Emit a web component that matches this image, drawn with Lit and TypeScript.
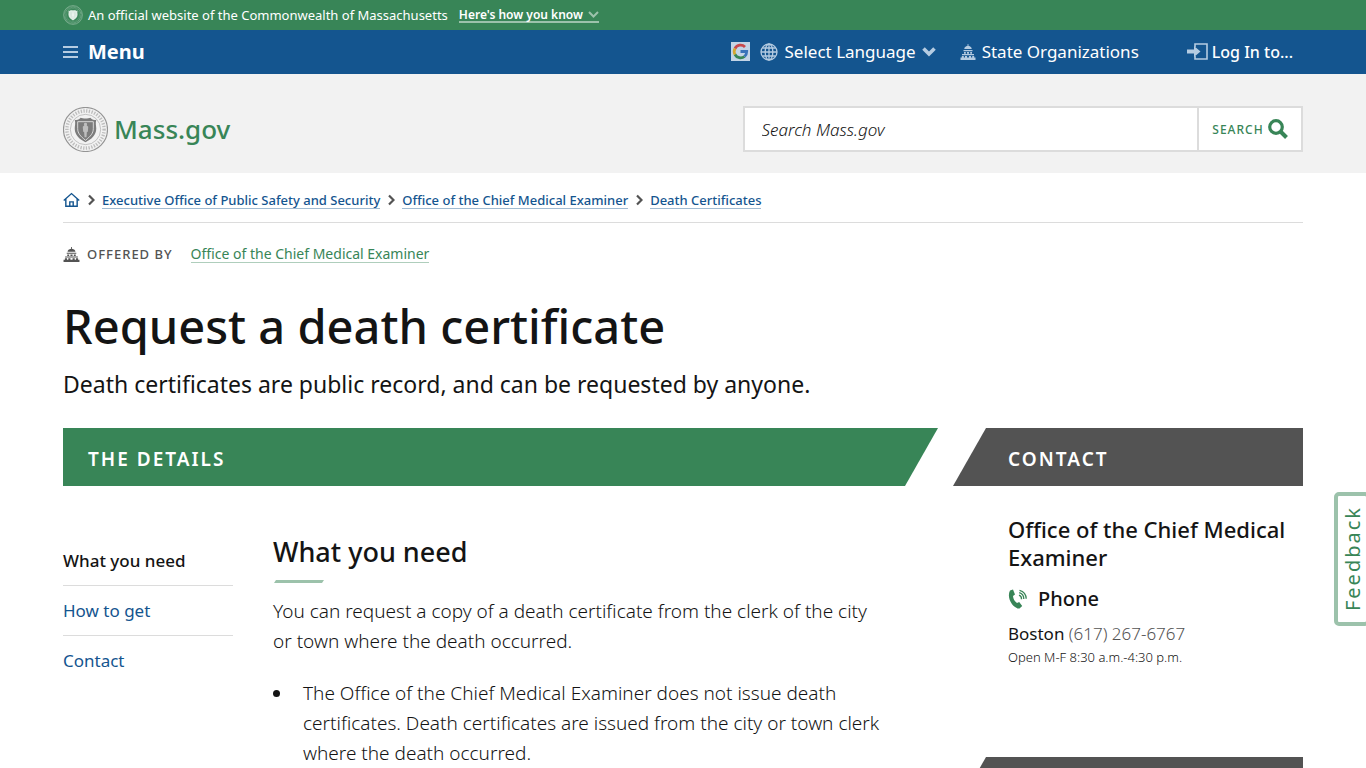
import { LitElement, html, css, svg } from "lit";
import { customElement } from "lit/decorators.js";

const capitol = svg`
  <path d="M7.600 0h.8v1.800c2 .3 3.300 1.600 3.300 3.300H4.300c0-1.700 1.300-3 3.300-3.300z"/>
  <path d="M3.500 6h9v1.200h-9zM4 8h1.800v1.700H4zM7 8h2v1.700H7zM10.200 8H12v1.700h-1.800zM2 10h12v1.200H2zM1.800 12h2v1.600h-2zM5 12h2v1.600H5zM9 12h2v1.600H9zM12.200 12h2v1.600h-2zM.5 13.600h15V16H.5z"/>`;

const seal = svg`
  <circle cx="24" cy="24" r="22.500" fill="none" stroke="currentColor" stroke-width="1.200" opacity=".8"/>
  <circle cx="24" cy="24" r="19" fill="none" stroke="currentColor" stroke-width="3.500" stroke-dasharray="1.300 1.500" opacity=".45"/>
  <circle cx="24" cy="24" r="15.500" fill="none" stroke="currentColor" stroke-width=".7" opacity=".6"/>
  <path d="M13 14c3 1 5-1 6-2 2 1 8 1 10 0 1 1 3 3 6 2-1 4 0 6 0 9 0 7-5 11-11 14-6-3-11-7-11-14 0-3 1-5 0-9z" fill="currentColor"/>
  <path d="M16 16h16v7c0 5-3 8-8 12-5-4-8-7-8-12z" fill="none" stroke="#fff" stroke-width="1" opacity=".7"/>
  <path d="M24 17a1.600 1.600 0 0 1 1.200 2.700l1.600 1.600-.4 5-1 .3-.4 5.400h-2l-.4-5.400-1-.3-.4-5 1.600-1.600A1.600 1.600 0 0 1 24 17z" fill="#fff" opacity=".5"/>`;

const chevron = svg`<path d="M2 1.500L6.500 6 2 10.500" fill="none" stroke="currentColor" stroke-width="2.200"/>`;

@customElement("app-root")
export class AppRoot extends LitElement {
  static styles = css`
    :host {
      display: block;
      color: #141414;
      background: #fff;
      font-family: "Noto Sans", "Open Sans", sans-serif;
      font-size: 17px;
    }
    * { box-sizing: border-box; }
    svg { display: block; flex: none; }
    a { color: inherit; text-decoration: none; }
    h1, h2, h3, h4, p, ul { margin: 0; padding: 0; font-weight: 500; }
    button { font: inherit; color: inherit; background: none; border: 0; padding: 0; cursor: pointer; }
    .wrap { max-width: 1288px; margin: 0 auto; padding: 0 24px; }
    .row { display: flex; align-items: center; }

    .official { background: #388557; color: #fff; font-size: 13px; }
    .official .row { height: 30px; gap: 5px; padding-bottom: 1px; }
    .seal-small { color: #d7e7dd; }
    .know {
      display: flex; align-items: center; gap: 5px; margin-left: 6px; padding-top: 2px;
      height: 17px; font-size: 12px; font-weight: 600; border-bottom: 2px solid #9cc2ab;
    }
    .know svg { color: #9cc2ab; }

    .bar { background: #14558f; color: #fff; }
    .bar .row { height: 44px; padding-bottom: 1px; }
    .bar svg { color: #b5cce2; }
    .menu { display: flex; align-items: center; gap: 10px; font-size: 20px; font-weight: 700; }
    .tools { display: flex; align-items: center; margin-left: auto; padding-right: 10px; }
    .tool { display: flex; align-items: center; gap: 6px; }
    .lang { margin-right: 24px; }
    .lang svg:first-child { margin-right: 3px; }
    .orgs { margin-right: 48px; }
    .login { gap: 4px; font-size: 16px; font-weight: 500; }

    .brand { background: #f2f2f2; }
    .brand .row { height: 99px; padding-top: 11px; justify-content: space-between; }
    .logo { display: flex; align-items: center; gap: 6px; color: #388557; font-size: 26px; font-weight: 500; }
    .logo svg { color: #7c7c7c; }
    .search { display: flex; width: 45.2%; height: 46px; border: 2px solid #dcdcdc; background: #fff; }
    .search input {
      flex: 1; min-width: 0; border: 0; outline: 0; padding: 0 17px; background: none;
      font: italic 300 17px "Noto Sans", sans-serif; color: #141414;
    }
    .search input::placeholder { color: #141414; opacity: 1; }
    .search button {
      display: flex; align-items: center; justify-content: center; gap: 4px; width: 104px;
      border-left: 2px solid #dcdcdc; color: #388557; font-size: 12px; font-weight: 500; letter-spacing: 1px;
    }

    .crumbs {
      display: flex; align-items: center; gap: 7px; height: 50px; padding-top: 5px;
      border-bottom: 1px solid #dcdcdc; color: #14558f; font-size: 13px; font-weight: 500;
    }
    .crumbs a { line-height: 16px; }
    .crumbs .text, .offered a { border-bottom: 1px solid #a1bbd2; }
    .crumbs .sep { color: #535353; }
    .offered { display: flex; align-items: center; height: 62px; font-size: 14px; color: #535353; }
    .offered .label { margin: 0 18px 0 7px; font-size: 13px; font-weight: 500; letter-spacing: 1px; }
    .offered a { color: #388557; border-color: #afcebc; line-height: 17px; }

    h1 { padding-top: 8px; font-size: 47px; line-height: 66px; }
    .lede { padding-top: 11px; font-size: 23px; line-height: 28px; font-weight: 400; }

    .columns { display: grid; grid-template-columns: minmax(0, 5fr) minmax(0, 2fr); column-gap: 15px; padding-top: 30px; }
    .band {
      height: 58px; padding: 3px 0 0 25px; display: flex; align-items: center;
      background: #388557; color: #fff; font-size: 19px; font-weight: 600; letter-spacing: 2px;
      clip-path: polygon(0 0, 100% 0, calc(100% - 33px) 100%, 0 100%);
    }
    .side .band { padding-left: 55px; background: #535353; clip-path: polygon(33px 0, 100% 0, 100% 100%, 0 100%); }
    .body { display: grid; grid-template-columns: 170px minmax(0, 1fr); column-gap: 40px; padding: 49px 53px 0 0; }
    .toc { padding-top: 1px; }
    .toc a { display: block; height: 50px; line-height: 49px; border-bottom: 1px solid #dcdcdc; color: #14558f; }
    .toc a:last-child { border: 0; }
    .toc .current { color: #141414; font-weight: 500; }
    h3 { font-size: 27px; line-height: 34px; }
    .rule { width: 50px; height: 3px; margin: 11px 0 13px 1px; background: #9cc2ab; clip-path: polygon(2px 0, 100% 0, calc(100% - 2px) 100%, 0 100%); }
    .text-block { font-size: 19px; line-height: 30px; font-weight: 300; }
    .list { list-style: none; margin-top: 22px; }
    .list li { display: flex; gap: 23px; }
    .list li::before { content: ""; flex: none; width: 7px; height: 7px; margin-top: 12px; border-radius: 50%; background: #141414; }

    .contact { height: 271px; padding: 29px 0 0 55px; }
    .contact h3 { font-size: 22px; line-height: 28px; }
    .phone { display: flex; align-items: center; gap: 10px; margin-top: 14px; font-size: 20px; line-height: 28px; }
    .phone svg { color: #388557; }
    .number { margin-top: 9px; line-height: 24px; font-weight: 400; }
    .number a { font-weight: 300; color: #535353; }
    .hours { font-size: 13px; line-height: 22px; font-weight: 300; }

    .feedback {
      position: fixed; right: -4px; top: 492px; width: 36px; height: 134px;
      border: 4px solid #9cc2ab; border-radius: 5px; background: #fff; color: #388557;
      font-size: 20px; letter-spacing: 2px; display: flex; align-items: center; justify-content: center;
    }
    .feedback span { writing-mode: vertical-rl; transform: rotate(180deg); }
  `;

  render() {
    const sep = html`<svg class="sep" width="8" height="12" viewBox="0 0 8 12" aria-hidden="true">${chevron}</svg>`;
    return html`
      <div class="official">
        <div class="wrap row">
          <svg class="seal-small" width="20" height="20" viewBox="0 0 48 48" aria-hidden="true">${seal}</svg>
          <span>An official website of the Commonwealth of Massachusetts</span>
          <button class="know">Here's how you know
            <svg width="11" height="8" viewBox="0 0 11 8"><path d="M1 1l4.500 4.500L10 1" fill="none" stroke="currentColor" stroke-width="2"/></svg>
          </button>
        </div>
      </div>

      <nav class="bar" aria-label="Main">
        <div class="wrap row">
          <button class="menu">
            <svg width="15" height="12" viewBox="0 0 15 12"><path d="M0 1h15M0 6h15M0 11h15" stroke="currentColor" stroke-width="2"/></svg>
            Menu
          </button>
          <div class="tools">
            <button class="tool lang">
              <svg width="19" height="19" viewBox="0 0 19 19">
                <path d="M0 0h19v19H0z" fill="#c3d4e6"/>
                <g fill="none" stroke-width="2.800">
                  <path d="M4 6.500A6.300 6.300 0 0 1 14 5" stroke="#c8474b"/>
                  <path d="M4 12.500a6.300 6.300 0 0 1 0-6" stroke="#d5a72e"/>
                  <path d="M4 12.500a6.300 6.300 0 0 0 9.500 2" stroke="#388557"/>
                  <path d="M9.500 9.500h6.200c0 2-.8 3.800-2.200 5" stroke="#3973b9"/>
                </g>
              </svg>
              <svg width="20" height="18" viewBox="0 0 20 18" fill="none" stroke="currentColor" stroke-width="1.300">
                <circle cx="10" cy="9" r="8"/><ellipse cx="10" cy="9" rx="3.800" ry="8"/>
                <path d="M10 1v16M2 9h16M3.300 5h13.400M3.300 13h13.400"/>
              </svg>
              <span>Select Language</span>
              <svg width="14" height="10" viewBox="0 0 14 10"><path d="M1.500 1.500L7 7l5.500-5.500" fill="none" stroke="currentColor" stroke-width="3.600"/></svg>
            </button>
            <a class="tool orgs" href="#orgs">
              <svg width="16" height="16" viewBox="0 0 16 16" fill="currentColor">${capitol}</svg>State Organizations
            </a>
            <button class="tool login">
              <svg width="21" height="17" viewBox="0 0 21 17">
                <path d="M8 4V1h12v15H8v-3" fill="none" stroke="currentColor" stroke-width="1.600"/>
                <path d="M0 6.500h7V3l6.500 5.500L7 14v-3.500H0z" fill="currentColor"/>
              </svg>Log In to...
            </button>
          </div>
        </div>
      </nav>

      <header class="brand">
        <div class="wrap row">
          <a class="logo" href="#home">
            <svg width="45" height="45" viewBox="1 1 46 46" aria-hidden="true">${seal}</svg>Mass.gov
          </a>
          <form class="search" role="search">
            <input type="search" placeholder="Search Mass.gov" aria-label="Search Mass.gov" />
            <button type="button">SEARCH
              <svg width="20" height="20" viewBox="0 0 20 20" fill="none" stroke="currentColor">
                <circle cx="8" cy="8" r="6.300" stroke-width="3.200"/><path d="M12.500 12.500l6 6" stroke-width="4"/>
              </svg>
            </button>
          </form>
        </div>
      </header>

      <main class="wrap">
        <nav class="crumbs" aria-label="Breadcrumb">
          <a href="#home" aria-label="Home">
            <svg width="17" height="16" viewBox="0 0 18 16" fill="none" stroke="currentColor" stroke-width="1.500">
              <path d="M.8 8.500L9 1.200l8.200 7.300M3 7v7.700h12V7M7.200 14.500V10h3.600v4.500"/>
            </svg>
          </a>
          ${sep}<a class="text" href="#eopss">Executive Office of Public Safety and Security</a>
          ${sep}<a class="text" href="#ocme">Office of the Chief Medical Examiner</a>
          ${sep}<a class="text" href="#certificates">Death Certificates</a>
        </nav>

        <div class="offered">
          <svg width="17" height="15" viewBox="0 0 16 16" preserveAspectRatio="none" fill="currentColor" aria-hidden="true">${capitol}</svg>
          <span class="label">OFFERED BY</span>
          <a href="#ocme">Office of the Chief Medical Examiner</a>
        </div>

        <h1>Request a death certificate</h1>
        <p class="lede">Death certificates are public record, and can be requested by anyone.</p>

        <div class="columns">
          <section>
            <h2 class="band">THE DETAILS</h2>
            <div class="body">
              <nav class="toc" aria-label="On this page">
                <a class="current" href="#need">What you need</a>
                <a href="#get">How to get</a>
                <a href="#contact">Contact</a>
              </nav>
              <article>
                <h3>What you need</h3>
                <div class="rule"></div>
                <p class="text-block">You can request a copy of a death certificate from the clerk of the city or town where the death occurred.</p>
                <ul class="list text-block">
                  <li><span>The Office of the Chief Medical Examiner does not issue death certificates. Death certificates are issued from the city or town clerk where the death occurred.</span></li>
                </ul>
              </article>
            </div>
          </section>
          <aside class="side">
            <h2 class="band">CONTACT</h2>
            <div class="contact">
              <h3>Office of the Chief Medical Examiner</h3>
              <h4 class="phone">
                <svg width="20" height="20" viewBox="0 0 20 20" aria-hidden="true">
                  <path d="M2 1.500L5 .500l2 5-2 1.500c.2 3 1.500 5 4 7l2.200-1 3 4-2.700 2.500C5.500 20-2 9 2 1.500z" fill="currentColor"/>
                  <path d="M11 6.200a4 4 0 0 1 2.500 4M11.200 3.700a6.500 6.500 0 0 1 4.600 6.300M11.500 1.300a9 9 0 0 1 6.700 8.500" fill="none" stroke="currentColor" stroke-width="1.300"/>
                </svg>Phone
              </h4>
              <p class="number">Boston <a href="tel:6172676767">(617) 267-6767</a></p>
              <p class="hours">Open M-F 8:30 a.m.-4:30 p.m.</p>
            </div>
            <div class="band"></div>
          </aside>
        </div>
      </main>

      <button class="feedback"><span>Feedback</span></button>
    `;
  }
}
